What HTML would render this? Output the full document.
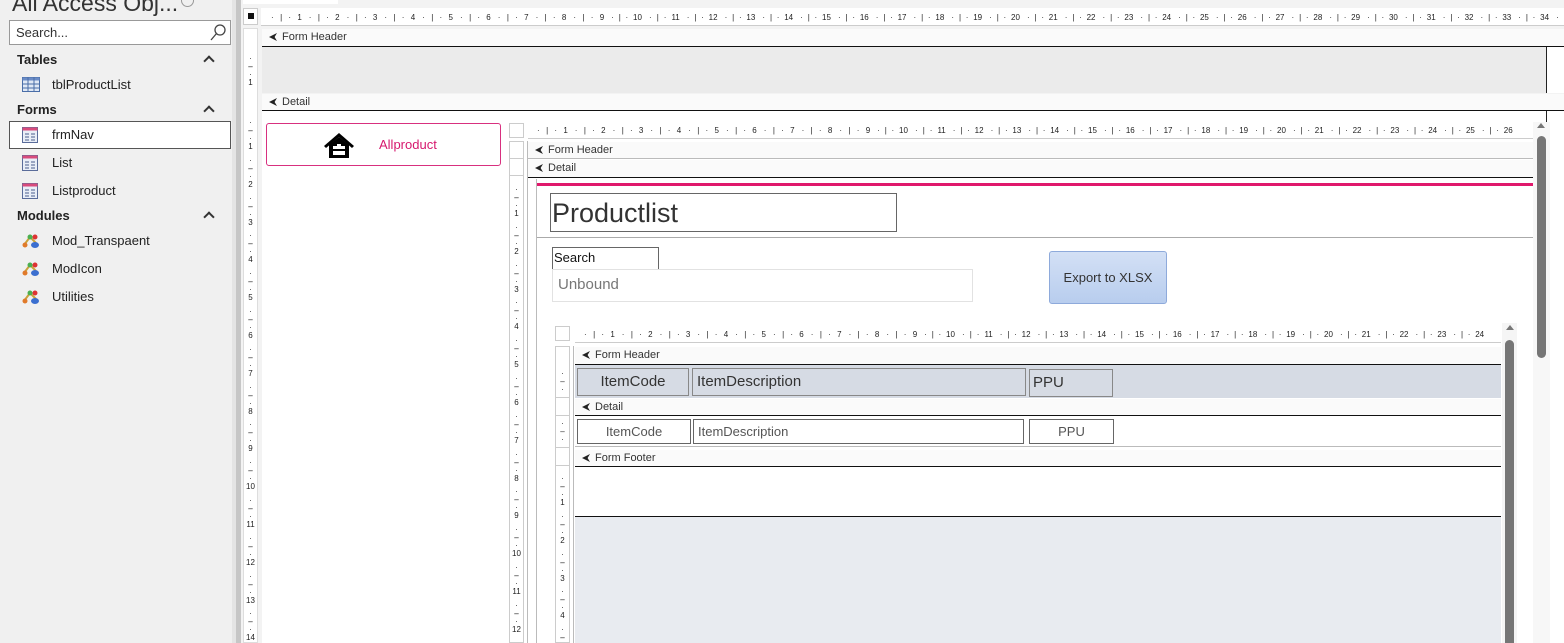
<!DOCTYPE html>
<html><head><meta charset="utf-8"><style>
*{margin:0;padding:0;box-sizing:border-box}
html{overflow:hidden;width:1564px;height:643px}
body{width:1564px;height:643px;overflow:hidden;background:#fff;position:relative;font-family:"Liberation Sans",sans-serif;color:#222}
.a{position:absolute}
.hr{position:absolute;display:flex;font-size:8px;color:#222;height:14px;align-items:center;white-space:nowrap;overflow:hidden}
.hr span{flex:none;width:37.8px;display:flex;justify-content:space-between;padding-left:7px;padding-right:0}
.vr{position:absolute;width:15px;font-size:8px;color:#222;overflow:hidden;text-align:center}
.vr div{height:37.8px;display:flex;flex-direction:column;justify-content:space-between;padding-top:8px;line-height:8px}
.bar{position:absolute;font-size:11px;color:#333;padding-left:20px;line-height:16px}
.bar:before{content:"";position:absolute;left:7px;top:4px;width:8px;height:8px;background:#222;clip-path:polygon(0 50%,100% 0,70% 50%,100% 100%)}
.navh{position:absolute;left:17px;font-weight:bold;font-size:13px}
.car{position:absolute;left:205px;width:8px;height:8px;border-left:2px solid #333;border-top:2px solid #333;transform:rotate(45deg)}
.it{position:absolute;left:52px;font-size:13px}
.ic{position:absolute;left:22px}
.box{position:absolute;border:1px solid #666;background:#fff}
</style></head><body>
<div class="a" style="left:0;top:0;width:236px;height:643px;background:#f0f0f0"></div>
<div class="a" style="left:12px;top:-10px;font-size:23px;color:#333;white-space:nowrap">All Access Obj...</div>
<div class="a" style="left:181px;top:-6px;width:13px;height:13px;border:1px solid #999;border-radius:50%"></div>
<div class="a" style="left:9px;top:20px;width:222px;height:25px;border:1px solid #999;background:#fff;font-size:13px;padding:4px 6px;color:#333">Search...</div>
<svg class="a" style="left:208px;top:23px" width="20" height="20"><circle cx="12" cy="7" r="5" fill="none" stroke="#444" stroke-width="1.3"/><line x1="8.5" y1="10.5" x2="3" y2="17" stroke="#444" stroke-width="1.3"/></svg>
<div class="navh" style="top:52px">Tables</div><div class="car" style="top:57px"></div>
<svg class="ic" style="top:77px" width="18" height="15"><rect x="0.5" y="0.5" width="17" height="14" fill="#dfe8f5" stroke="#4a6ea8"/><rect x="0.5" y="0.5" width="17" height="3" fill="#6b8cc6"/><path d="M6 0v15M12 0v15M0 7h18M0 11h18" stroke="#4a6ea8"/></svg>
<div class="it" style="top:77px">tblProductList</div>
<div class="navh" style="top:102px">Forms</div><div class="car" style="top:107px"></div>
<div class="a" style="left:9px;top:121px;width:222px;height:28px;border:1px solid #555;background:#fff"></div>
<svg class="ic" style="top:127px" width="16" height="16"><rect x="0.5" y="0.5" width="15" height="15" fill="#e9eef7" stroke="#5a6c9a"/><rect x="0.5" y="0.5" width="15" height="3" fill="#d84b7c"/><path d="M3 7h4M9 7h4M3 10h4M9 10h4M3 13h4M9 13h4" stroke="#4a5d8c"/></svg>
<div class="it" style="top:127px">frmNav</div>
<svg class="ic" style="top:155px" width="16" height="16"><rect x="0.5" y="0.5" width="15" height="15" fill="#e9eef7" stroke="#5a6c9a"/><rect x="0.5" y="0.5" width="15" height="3" fill="#d84b7c"/><path d="M3 7h4M9 7h4M3 10h4M9 10h4M3 13h4M9 13h4" stroke="#4a5d8c"/></svg>
<div class="it" style="top:155px">List</div>
<svg class="ic" style="top:183px" width="16" height="16"><rect x="0.5" y="0.5" width="15" height="15" fill="#e9eef7" stroke="#5a6c9a"/><rect x="0.5" y="0.5" width="15" height="3" fill="#d84b7c"/><path d="M3 7h4M9 7h4M3 10h4M9 10h4M3 13h4M9 13h4" stroke="#4a5d8c"/></svg>
<div class="it" style="top:183px">Listproduct</div>
<div class="navh" style="top:208px">Modules</div><div class="car" style="top:213px"></div>
<svg class="ic" style="top:233px" width="18" height="16"><path d="M2 12L8 4L14 10" stroke="#c9a23a" stroke-width="2" fill="none"/><circle cx="3" cy="12" r="2.5" fill="#e07a2a"/><circle cx="8" cy="4" r="2.5" fill="#4caf50"/><circle cx="13" cy="4" r="2.5" fill="#d33"/><ellipse cx="13" cy="12" rx="4" ry="3" fill="#3b6fd0"/></svg>
<div class="it" style="top:233px">Mod_Transpaent</div>
<svg class="ic" style="top:261px" width="18" height="16"><path d="M2 12L8 4L14 10" stroke="#c9a23a" stroke-width="2" fill="none"/><circle cx="3" cy="12" r="2.5" fill="#e07a2a"/><circle cx="8" cy="4" r="2.5" fill="#4caf50"/><circle cx="13" cy="4" r="2.5" fill="#d33"/><ellipse cx="13" cy="12" rx="4" ry="3" fill="#3b6fd0"/></svg>
<div class="it" style="top:261px">ModIcon</div>
<svg class="ic" style="top:289px" width="18" height="16"><path d="M2 12L8 4L14 10" stroke="#c9a23a" stroke-width="2" fill="none"/><circle cx="3" cy="12" r="2.5" fill="#e07a2a"/><circle cx="8" cy="4" r="2.5" fill="#4caf50"/><circle cx="13" cy="4" r="2.5" fill="#d33"/><ellipse cx="13" cy="12" rx="4" ry="3" fill="#3b6fd0"/></svg>
<div class="it" style="top:289px">Utilities</div>
<div class="a" style="left:232px;top:0;width:4px;height:643px;background:#e4e4e4"></div>
<div class="a" style="left:236px;top:0;width:5px;height:643px;background:#c6c6c6"></div>
<div class="a" style="left:241px;top:0;width:1323px;height:643px;background:#f3f3f3"></div>
<div class="a" style="left:243px;top:0;width:95px;height:4px;background:#fff"></div>
<div class="a" style="left:243px;top:8px;width:15px;height:17px;background:#fff;border:1px solid #ccc"></div>
<div class="a" style="left:248px;top:13px;width:6px;height:6px;background:#111"></div>
<div class="a" style="left:261px;top:8px;width:1303px;height:18px;background:#fff;border-bottom:1px solid #ccc"></div>
<div class="hr" style="left:264px;top:10px">
<span><i>·</i><i>|</i><i>·</i>1</span><span><i>·</i><i>|</i><i>·</i>2</span><span><i>·</i><i>|</i><i>·</i>3</span><span><i>·</i><i>|</i><i>·</i>4</span><span><i>·</i><i>|</i><i>·</i>5</span><span><i>·</i><i>|</i><i>·</i>6</span><span><i>·</i><i>|</i><i>·</i>7</span><span><i>·</i><i>|</i><i>·</i>8</span><span><i>·</i><i>|</i><i>·</i>9</span><span><i>·</i><i>|</i><i>·</i>10</span><span><i>·</i><i>|</i><i>·</i>11</span><span><i>·</i><i>|</i><i>·</i>12</span><span><i>·</i><i>|</i><i>·</i>13</span><span><i>·</i><i>|</i><i>·</i>14</span><span><i>·</i><i>|</i><i>·</i>15</span><span><i>·</i><i>|</i><i>·</i>16</span><span><i>·</i><i>|</i><i>·</i>17</span><span><i>·</i><i>|</i><i>·</i>18</span><span><i>·</i><i>|</i><i>·</i>19</span><span><i>·</i><i>|</i><i>·</i>20</span><span><i>·</i><i>|</i><i>·</i>21</span><span><i>·</i><i>|</i><i>·</i>22</span><span><i>·</i><i>|</i><i>·</i>23</span><span><i>·</i><i>|</i><i>·</i>24</span><span><i>·</i><i>|</i><i>·</i>25</span><span><i>·</i><i>|</i><i>·</i>26</span><span><i>·</i><i>|</i><i>·</i>27</span><span><i>·</i><i>|</i><i>·</i>28</span><span><i>·</i><i>|</i><i>·</i>29</span><span><i>·</i><i>|</i><i>·</i>30</span><span><i>·</i><i>|</i><i>·</i>31</span><span><i>·</i><i>|</i><i>·</i>32</span><span><i>·</i><i>|</i><i>·</i>33</span><span><i>·</i><i>|</i><i>·</i>34</span><span><i>·</i><i></i><i></i></span>
</div>
<div class="a" style="left:243px;top:28px;width:15px;height:615px;background:#fff;border:1px solid #ddd"></div>
<div class="vr" style="left:243px;top:47px;height:46px"><div><i>·</i><i>–</i><i>·</i>1</div><div><i>·</i></div></div>
<div class="vr" style="left:243px;top:111px;height:532px"><div><i>·</i><i>–</i><i>·</i>1</div><div><i>·</i><i>–</i><i>·</i>2</div><div><i>·</i><i>–</i><i>·</i>3</div><div><i>·</i><i>–</i><i>·</i>4</div><div><i>·</i><i>–</i><i>·</i>5</div><div><i>·</i><i>–</i><i>·</i>6</div><div><i>·</i><i>–</i><i>·</i>7</div><div><i>·</i><i>–</i><i>·</i>8</div><div><i>·</i><i>–</i><i>·</i>9</div><div><i>·</i><i>–</i><i>·</i>10</div><div><i>·</i><i>–</i><i>·</i>11</div><div><i>·</i><i>–</i><i>·</i>12</div><div><i>·</i><i>–</i><i>·</i>13</div><div><i>·</i><i>–</i><i>·</i>14</div></div>
<div class="bar" style="left:262px;top:29px;width:1302px;height:18px;background:#fafafa;border-bottom:1px solid #111">Form Header</div>
<div class="a" style="left:262px;top:47px;width:1284px;height:46px;background:#ebebeb"></div>
<div class="a" style="left:1546px;top:47px;width:18px;height:46px;background:#fff;border-left:1px solid #222"></div>
<div class="bar" style="left:262px;top:94px;width:1302px;height:17px;background:#fafafa;border-bottom:1px solid #111">Detail</div>
<div class="a" style="left:262px;top:111px;width:1302px;height:532px;background:#fff"></div>
<div class="a" style="left:1546px;top:111px;width:1px;height:532px;background:#222"></div>
<div class="a" style="left:266px;top:123px;width:235px;height:43px;border:1px solid #d8307f;border-radius:3px;background:#fff"></div>
<svg class="a" style="left:322px;top:131px" width="34" height="28"><path d="M17 2L2 15l2 2L17 6l13 11 2-2z" fill="#000"/><path d="M7 14v13h20V14L17 6z" fill="#000"/><rect x="11" y="15" width="12" height="9" fill="#fff"/><rect x="11" y="18" width="12" height="2" fill="#000"/><rect x="15" y="13" width="4" height="3" fill="#fff"/></svg>
<div class="a" style="left:379px;top:137px;font-size:13px;color:#d6186e">Allproduct</div>
<div class="a" style="left:509px;top:123px;width:15px;height:15px;border:1px solid #ccc;background:#fff"></div>
<div class="a" style="left:528px;top:122px;width:1006px;height:17px;background:#fff;border-bottom:1px solid #ccc"></div>
<div class="hr" style="left:530px;top:123px">
<span><i>·</i><i>|</i><i>·</i>1</span><span><i>·</i><i>|</i><i>·</i>2</span><span><i>·</i><i>|</i><i>·</i>3</span><span><i>·</i><i>|</i><i>·</i>4</span><span><i>·</i><i>|</i><i>·</i>5</span><span><i>·</i><i>|</i><i>·</i>6</span><span><i>·</i><i>|</i><i>·</i>7</span><span><i>·</i><i>|</i><i>·</i>8</span><span><i>·</i><i>|</i><i>·</i>9</span><span><i>·</i><i>|</i><i>·</i>10</span><span><i>·</i><i>|</i><i>·</i>11</span><span><i>·</i><i>|</i><i>·</i>12</span><span><i>·</i><i>|</i><i>·</i>13</span><span><i>·</i><i>|</i><i>·</i>14</span><span><i>·</i><i>|</i><i>·</i>15</span><span><i>·</i><i>|</i><i>·</i>16</span><span><i>·</i><i>|</i><i>·</i>17</span><span><i>·</i><i>|</i><i>·</i>18</span><span><i>·</i><i>|</i><i>·</i>19</span><span><i>·</i><i>|</i><i>·</i>20</span><span><i>·</i><i>|</i><i>·</i>21</span><span><i>·</i><i>|</i><i>·</i>22</span><span><i>·</i><i>|</i><i>·</i>23</span><span><i>·</i><i>|</i><i>·</i>24</span><span><i>·</i><i>|</i><i>·</i>25</span><span><i>·</i><i>|</i><i>·</i>26</span>
</div>
<div class="a" style="left:509px;top:141px;width:15px;height:502px;border:1px solid #ccc;background:#fff"></div>
<div class="a" style="left:509px;top:158px;width:15px;height:18px;border-top:1px solid #ccc;border-bottom:1px solid #ccc"></div>
<div class="vr" style="left:509px;top:178px;height:465px"><div><i>·</i><i>–</i><i>·</i>1</div><div><i>·</i><i>–</i><i>·</i>2</div><div><i>·</i><i>–</i><i>·</i>3</div><div><i>·</i><i>–</i><i>·</i>4</div><div><i>·</i><i>–</i><i>·</i>5</div><div><i>·</i><i>–</i><i>·</i>6</div><div><i>·</i><i>–</i><i>·</i>7</div><div><i>·</i><i>–</i><i>·</i>8</div><div><i>·</i><i>–</i><i>·</i>9</div><div><i>·</i><i>–</i><i>·</i>10</div><div><i>·</i><i>–</i><i>·</i>11</div><div><i>·</i><i>–</i><i>·</i>12</div><div><i>·</i><i>–</i><i>·</i>13</div></div>
<div class="a" style="left:527px;top:141px;width:1px;height:502px;background:#bbb"></div>
<div class="bar" style="left:528px;top:142px;width:1006px;height:17px;background:#fafafa;border-bottom:1px solid #bbb">Form Header</div>
<div class="bar" style="left:528px;top:160px;width:1006px;height:18px;background:#fafafa;border-bottom:1px solid #111">Detail</div>
<div class="a" style="left:536px;top:179px;width:1px;height:464px;background:#bbb"></div>
<div class="a" style="left:537px;top:183px;width:996px;height:3px;background:#e0186c"></div>
<div class="box" style="left:550px;top:193px;width:347px;height:39px;font-size:27px;padding:2px 0 0 1px;color:#333;line-height:34px">Productlist</div>
<div class="a" style="left:537px;top:237px;width:996px;height:1px;background:#aaa"></div>
<div class="box" style="left:552px;top:247px;width:107px;height:23px;font-size:13px;padding:2px 1px;color:#111">Search</div>
<div class="a" style="left:552px;top:269px;width:421px;height:33px;border:1px solid #e2e2e2;font-size:15px;color:#777;padding:6px 5px">Unbound</div>
<div class="a" style="left:1049px;top:251px;width:118px;height:53px;border:1px solid #8eaadb;border-radius:3px;background:linear-gradient(#d3e0f5,#b8cdee);font-size:13px;color:#333;text-align:center;line-height:51px">Export to XLSX</div>
<div class="a" style="left:1533px;top:122px;width:17px;height:521px;background:#f7f7f7"></div>
<div class="a" style="left:1537px;top:123px;width:0;height:0;border-left:4px solid transparent;border-right:4px solid transparent;border-bottom:5px solid #777"></div>
<div class="a" style="left:1537px;top:136px;width:9px;height:222px;background:#767676;border-radius:5px"></div>
<div class="a" style="left:555px;top:326px;width:15px;height:15px;border:1px solid #ccc;background:#fff"></div>
<div class="a" style="left:575px;top:326px;width:926px;height:17px;background:#fff;border-bottom:1px solid #ccc"></div>
<div class="hr" style="left:577px;top:327px;width:924px">
<span><i>·</i><i>|</i><i>·</i>1</span><span><i>·</i><i>|</i><i>·</i>2</span><span><i>·</i><i>|</i><i>·</i>3</span><span><i>·</i><i>|</i><i>·</i>4</span><span><i>·</i><i>|</i><i>·</i>5</span><span><i>·</i><i>|</i><i>·</i>6</span><span><i>·</i><i>|</i><i>·</i>7</span><span><i>·</i><i>|</i><i>·</i>8</span><span><i>·</i><i>|</i><i>·</i>9</span><span><i>·</i><i>|</i><i>·</i>10</span><span><i>·</i><i>|</i><i>·</i>11</span><span><i>·</i><i>|</i><i>·</i>12</span><span><i>·</i><i>|</i><i>·</i>13</span><span><i>·</i><i>|</i><i>·</i>14</span><span><i>·</i><i>|</i><i>·</i>15</span><span><i>·</i><i>|</i><i>·</i>16</span><span><i>·</i><i>|</i><i>·</i>17</span><span><i>·</i><i>|</i><i>·</i>18</span><span><i>·</i><i>|</i><i>·</i>19</span><span><i>·</i><i>|</i><i>·</i>20</span><span><i>·</i><i>|</i><i>·</i>21</span><span><i>·</i><i>|</i><i>·</i>22</span><span><i>·</i><i>|</i><i>·</i>23</span><span><i>·</i><i>|</i><i>·</i>24</span>
</div>
<div class="a" style="left:555px;top:346px;width:15px;height:297px;border:1px solid #ccc;background:#fff"></div>
<div class="a" style="left:555px;top:397px;width:15px;height:19px;border-top:1px solid #ccc;border-bottom:1px solid #ccc"></div>
<div class="a" style="left:555px;top:447px;width:15px;height:19px;border-top:1px solid #ccc;border-bottom:1px solid #ccc"></div>
<div class="vr" style="left:555px;top:366px;height:31px;padding-top:4px;line-height:8px">·<br>–<br>·</div>
<div class="vr" style="left:555px;top:418px;height:28px;padding-top:2px;line-height:8px">·<br>–<br>·</div>
<div class="vr" style="left:555px;top:467px;height:176px"><div><i>·</i><i>–</i><i>·</i>1</div><div><i>·</i><i>–</i><i>·</i>2</div><div><i>·</i><i>–</i><i>·</i>3</div><div><i>·</i><i>–</i><i>·</i>4</div><div><i>·</i><i>–</i><i>·</i>5</div></div>
<div class="a" style="left:573px;top:346px;width:1px;height:297px;background:#bbb"></div>
<div class="bar" style="left:575px;top:347px;width:926px;height:18px;background:#fafafa;border-bottom:1px solid #111">Form Header</div>
<div class="a" style="left:575px;top:365px;width:926px;height:33px;background:#d6dbe4"></div>
<div class="a" style="left:577px;top:368px;width:112px;height:28px;border:1px solid #888;background:#d6dbe4;font-size:15px;color:#333;text-align:center;line-height:26px">ItemCode</div>
<div class="a" style="left:692px;top:368px;width:334px;height:28px;border:1px solid #888;background:#d6dbe4;font-size:15px;color:#333;padding-left:4px;line-height:26px">ItemDescription</div>
<div class="a" style="left:1029px;top:369px;width:84px;height:28px;border:1px solid #888;background:#d6dbe4;font-size:15px;color:#333;padding-left:3px;line-height:26px">PPU</div>
<div class="bar" style="left:575px;top:399px;width:926px;height:17px;background:#fafafa;border-bottom:1px solid #111">Detail</div>
<div class="box" style="left:577px;top:419px;width:114px;height:25px;font-size:13px;color:#555;text-align:center;line-height:23px">ItemCode</div>
<div class="box" style="left:693px;top:419px;width:331px;height:25px;font-size:13px;color:#555;padding-left:4px;line-height:23px">ItemDescription</div>
<div class="box" style="left:1029px;top:419px;width:85px;height:25px;font-size:13px;color:#555;text-align:center;line-height:23px">PPU</div>
<div class="a" style="left:575px;top:446px;width:926px;height:1px;background:#bbb"></div>
<div class="bar" style="left:575px;top:450px;width:926px;height:17px;background:#fafafa;border-bottom:1px solid #111">Form Footer</div>
<div class="a" style="left:575px;top:516px;width:926px;height:1px;background:#111"></div>
<div class="a" style="left:575px;top:517px;width:926px;height:126px;background:#e8ebf0"></div>
<div class="a" style="left:1502px;top:323px;width:15px;height:320px;background:#f5f5f5"></div>
<div class="a" style="left:1506px;top:325px;width:0;height:0;border-left:4px solid transparent;border-right:4px solid transparent;border-bottom:5px solid #777"></div>
<div class="a" style="left:1505px;top:340px;width:9px;height:303px;background:#767676;border-radius:5px 5px 0 0"></div>
</body></html>
